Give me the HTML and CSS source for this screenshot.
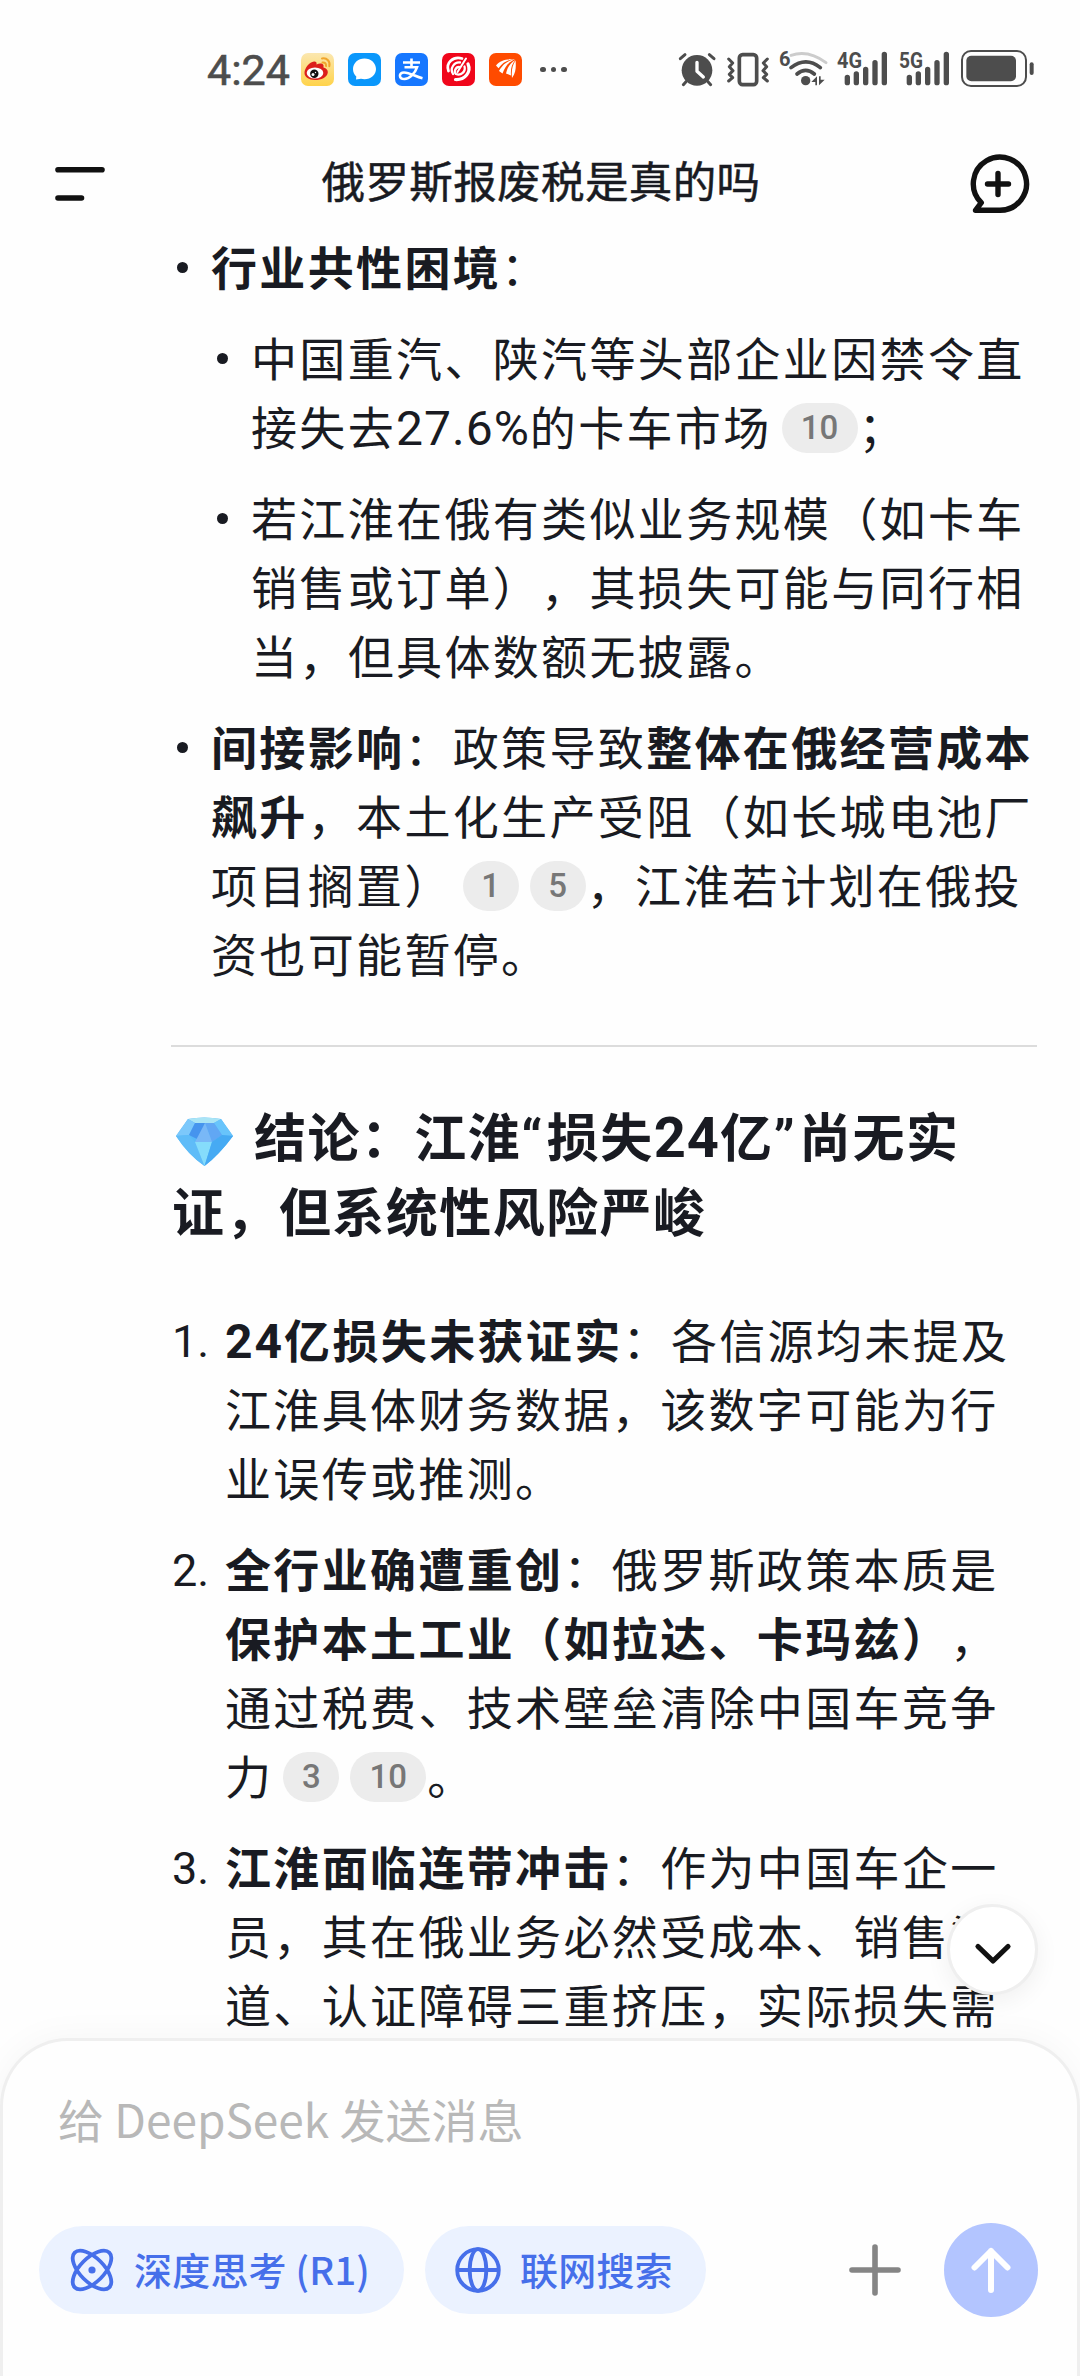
FILE: index.html
```html
<!DOCTYPE html>
<html lang="zh-CN">
<head>
<meta charset="utf-8">
<title>俄罗斯报废税是真的吗</title>
<link rel="stylesheet" href="styles.css">
</head>
<body>
<div class="screen">
  <div class="status">
    <span class="clock">4:24</span>
    <div class="apps">
      <svg class="app" viewBox="0 0 33 33"><defs><linearGradient id="wb" x1="0" y1="0" x2="0" y2="1"><stop offset="0" stop-color="#fbe7b0"/><stop offset="1" stop-color="#ffd34a"/></linearGradient></defs><rect width="33" height="33" rx="7" fill="url(#wb)"/><path d="M3.5 20c0-5 5-11 9.500-11.500 2-.2 3 1 2.500 3 2.500-1.200 6.500-1.500 7 .8.2 1-.2 1.700 0 2.200 3 .7 4.500 2.700 4.300 5C26.300 24.500 20 27 14 27S3.500 24 3.500 20z" fill="#dc1f1c"/><ellipse cx="14" cy="20" rx="8.300" ry="5.600" fill="#fff"/><circle cx="13.300" cy="20.700" r="4.200" fill="#111"/><circle cx="12" cy="21.500" r="1.500" fill="#fff"/><circle cx="14.500" cy="19.500" r=".7" fill="#fff"/><path d="M21 5.500c5-1 8.500 3 7.300 7.700M21.500 9.500c2.500-.3 3.800 1.200 3.500 3.500" fill="none" stroke="#f0a52c" stroke-width="2" stroke-linecap="round"/></svg>
      <svg class="app" viewBox="0 0 33 33"><rect width="33" height="33" rx="7" fill="#0a97fb"/><path d="M16.500 5.500c6.500 0 11.500 4.700 11.500 10.500s-5 10.300-11.500 10.300c-1.200 0-2.500-.2-3.500-.5L8 26.500l.3-3C6.300 21.700 5 19 5 16 5 10.200 10 5.500 16.500 5.500z" fill="#fff"/></svg>
      <svg class="app" viewBox="0 0 33 33"><rect width="33" height="33" rx="7" fill="#1677ff"/><path d="M8 9.500h17M16.500 5.500v8.500M9.500 14.300h12.500c-2 6-7.500 11.700-12.500 11.700-6 0-6-6.500-.5-6.500 6 0 11 4 18.500 5.800" fill="none" stroke="#fff" stroke-width="2.600"/></svg>
      <svg class="app" viewBox="0 0 33 33"><rect width="33" height="33" rx="7" fill="#f0061b"/><g fill="none" stroke="#fff" stroke-linecap="round"><path d="M20 5.500C11 3 3.500 10 6.500 18" stroke-width="2.800"/><path d="M18 9.500c-6-.5-10.500 6-7 11.500" stroke-width="2.300"/><path d="M26 11c3.500 8-3 16-12.500 15.500" stroke-width="3.200"/><path d="M22.500 13.500c1.500 5-3.500 9.500-8.500 7.500-2.500-2-.5-7 3-7" stroke-width="2.300"/><path d="M24 5.500 15.500 19" stroke-width="2"/></g></svg>
      <svg class="app" viewBox="0 0 33 33"><rect width="33" height="33" rx="7" fill="#ff4b00"/><path d="M7 12.500C11.500 7 17 6 26 6c-8 1-12 3-16.500 9.300zM10 18c4-7 8-10 16-11.700-6.500 3-9.800 6.700-12.500 14.200zM17 20.500c1.500-6 4-10.500 9.500-13.500-4 4.500-5 9-4.500 15.500zM23 25c-.8-7 .3-13 3.700-17.500 0 5 1 11-3.700 17.500z" fill="#fff"/></svg>
    </div>
    <span class="more"><i></i><i></i><i></i></span>
    <div class="signals">
      <svg width="36" height="35" viewBox="54 66 108 105"><circle cx="108" cy="121" r="46" fill="#4d4d4d"/><path d="M58 86 72 74M159 86 145 74M75 155l-8 9M141 155l8 9" stroke="#4d4d4d" stroke-width="9" stroke-linecap="round"/><path d="M108 97v27l19 17" fill="none" stroke="#fff" stroke-width="10" stroke-linecap="round" stroke-linejoin="round"/></svg>
      <svg class="vibrate" width="42" height="35" viewBox="198 66 126 105"><rect x="235" y="74" width="52" height="90" rx="10" fill="none" stroke="#4d4d4d" stroke-width="11"/><path d="m203 87 12 12-10 11 11 12-11 11 10 10-12 10M319 87l-12 12 10 11-11 12 11 11-10 10 12 10" fill="none" stroke="#4d4d4d" stroke-width="9" stroke-linecap="round" stroke-linejoin="round"/></svg>
      <svg class="wifi" width="47" height="38" viewBox="356 57 141 114"><path d="M389 76q52-18 105 22" fill="none" stroke="#ccc" stroke-width="9" stroke-linecap="round"/><path d="M389 113q45-35 88 0M407 132q26-22 52 0" fill="none" stroke="#4d4d4d" stroke-width="11" stroke-linecap="round"/><circle cx="433" cy="152" r="14" fill="#4d4d4d"/><path d="m450 156 17-17v27h-5v-10zM490 149l-17 17v-27h5v10z" fill="#4d4d4d"/><text x="353" y="108" class="gen">6</text></svg>
      <svg class="net" width="50" height="37" viewBox="528 60 150 111"><path d="M559 142v16M586 132v26M614 118v40M642 98v60M670 73v85" stroke="#4d4d4d" stroke-width="16" stroke-linecap="round"/><text x="528" y="114" class="gen" textLength="75" lengthAdjust="spacingAndGlyphs">4G</text></svg>
      <svg class="net" width="50" height="37" viewBox="528 60 150 111"><path d="M559 142v16M586 132v26M614 118v40M642 98v60M670 73v85" stroke="#4d4d4d" stroke-width="16" stroke-linecap="round"/><text x="528" y="114" class="gen" textLength="72" lengthAdjust="spacingAndGlyphs">5G</text></svg>
      <svg class="battery" width="73" height="37" viewBox="900 60 219 111"><rect x="903" y="63" width="192" height="105" rx="27" fill="none" stroke="#4d4d4d" stroke-width="6"/><rect x="916" y="77" width="149" height="77" rx="15" fill="#4d4d4d"/><path d="M1112 103v26" stroke="#4d4d4d" stroke-width="12" stroke-linecap="round"/></svg>
    </div>
  </div>

  <header class="topbar">
    <svg class="menu" width="50" height="36" viewBox="0 0 50 36"><path d="M3 3.800h44M3 32h23.500" stroke="#111" stroke-width="5.600" stroke-linecap="round"/></svg>
    <h1>俄罗斯报废税是真的吗</h1>
    <svg class="newchat" width="60" height="60" viewBox="0 0 60 60"><path d="M13.300 48.700A26.600 26.600 0 1 1 32 56.300H7.500zM30 19.500v21M19.500 30h21" fill="none" stroke="#111" stroke-width="5.400" stroke-linecap="round" stroke-linejoin="round"/></svg>
  </header>

  <main class="answer">
    <ul class="bullets">
      <li><strong>行业共性困境</strong>：
        <ul class="bullets nested">
          <li>中国重汽、陕汽等头部企业因禁令直<br>接失去<span class="num">27.6%</span>的卡车市场<span class="cite wide">10</span>；</li>
          <li>若江淮在俄有类似业务规模（如卡车<br>销售或订单），其损失可能与同行相<br>当，但具体数额无披露。</li>
        </ul>
      </li>
      <li><strong>间接影响</strong>：政策导致<strong>整体在俄经营成本<br>飙升</strong>，本土化生产受阻（如长城电池厂<br>项目搁置）<span class="cite">1</span><span class="cite">5</span>，江淮若计划在俄投<br>资也可能暂停。</li>
    </ul>
    <hr>
    <h2><svg class="gem" width="59" height="49" viewBox="0 0 59 49"><path d="M13 2Q29 -1 46 2L58 19Q44 38 29.500 49 14 38 1 19z" fill="#58b9f8"/><path d="M13 2Q29-1 46 2L39 6H20z" fill="#a9e4f5"/><path d="M13 2l7 4-6 12L1 19z" fill="#7cc8fb"/><path d="M46 2l-7 4 8 12 11 1z" fill="#68c4fb"/><path d="M20 6h10l-4 18-12-6z" fill="#4694ee"/><path d="M30 6h9l8 12-10 7z" fill="#61a7f4"/><path d="M30 6l7 19H20z" fill="#79b8f7"/><path d="M1 19l13-1 6 7 9.500 24Q13 38 1 19z" fill="#5fbcf8"/><path d="M20 25h17l-7.500 24z" fill="#85dcfb"/><path d="M37 25l10-7 11 1Q44 38 29.500 49z" fill="#46aaf3"/></svg>结论：江淮<span class="quote">“</span>损失<span class="num">24</span>亿<span class="quote">”</span>尚无实<br>证，但系统性风险严峻</h2>
    <ol class="points">
      <li><span class="idx">1.</span><p><strong><span class="num">24</span>亿损失未获证实</strong>：各信源均未提及<br>江淮具体财务数据，该数字可能为行<br>业误传或推测。</p></li>
      <li><span class="idx">2.</span><p><strong>全行业确遭重创</strong>：俄罗斯政策本质是<br><strong>保护本土工业（如拉达、卡玛兹）</strong>，<br>通过税费、技术壁垒清除中国车竞争<br>力<span class="cite">3</span><span class="cite wide">10</span>。</p></li>
      <li><span class="idx">3.</span><p><strong>江淮面临连带冲击</strong>：作为中国车企一<br>员，其在俄业务必然受成本、销售渠<br>道、认证障碍三重挤压，实际损失需</p></li>
    </ol>
    <button class="to-bottom"><svg width="36" height="22" viewBox="0 0 36 22"><path d="M3 3.500 18 18 33 3.500" fill="none" stroke="#111" stroke-width="5.200" stroke-linecap="round" stroke-linejoin="round"/></svg></button>
  </main>

  <footer class="composer">
    <div class="placeholder">给 DeepSeek 发送消息</div>
    <div class="tools">
      <button class="pill think"><svg width="46" height="46" viewBox="-23 -23 46 46"><g fill="none" stroke="#466fea" stroke-width="3.800"><ellipse rx="24.500" ry="12" transform="rotate(45)"/><ellipse rx="24.500" ry="12" transform="rotate(-45)"/></g><circle r="3.600" fill="#466fea"/></svg><span>深度思考 (R1)</span></button>
      <button class="pill web"><svg width="46" height="46" viewBox="-23 -23 46 46"><g fill="none" stroke="#466fea" stroke-width="3.800"><circle r="20.800"/><ellipse rx="8.300" ry="20.800"/><path d="M-21 0h42"/></g></svg><span>联网搜索</span></button>
      <svg class="plus" width="52" height="52" viewBox="0 0 52 52"><path d="M26 3v46M3 26h46" stroke="#858585" stroke-width="5.600" stroke-linecap="round"/></svg>
      <button class="send"><svg width="44" height="48" viewBox="0 0 44 48"><path d="M22 44V5M5.500 21.500 22 5l16.500 16.500" fill="none" stroke="#fff" stroke-width="6" stroke-linecap="round" stroke-linejoin="round"/></svg></button>
    </div>
  </footer>
</div>
</body>
</html>
```
FILE: styles.css
```css
* { box-sizing: border-box; margin: 0; padding: 0; }
body {
  background: #fefefe;
  color: #191b22;
  font-family: "Noto Sans CJK SC", sans-serif;
  text-spacing-trim: space-all;
}
svg { display: block; flex: none; overflow: visible; }
button { border: 0; font: inherit; }
ul, ol { list-style: none; }
.screen {
  width: 1080px;
  height: 2376px;
  display: flex;
  flex-direction: column;
  overflow: hidden;
}

/* status bar */
.status {
  height: 139px;
  padding: 0 46px 0 207px;
  display: flex;
  align-items: center;
}
.clock {
  width: 94px;
  font: 43px/50px Roboto, sans-serif;
  color: #4d4d4d;
  -webkit-text-stroke: .6px #4d4d4d;
}
.apps { display: flex; gap: 14px; }
.app { width: 33px; height: 33px; }
.more { display: flex; gap: 5px; margin-left: 18px; }
.more i { width: 5.500px; height: 5.500px; border-radius: 50%; background: #4d4d4d; }
.signals { margin: 0 0 4px auto; display: flex; align-items: flex-end; }
.vibrate { margin-left: 12px; }
.wifi { margin-left: 11px; }
.net { margin-left: 10px; }
.net + .net { margin-left: 12px; }
.battery { margin-left: 12px; }
.gen { font: bold 66px "Roboto", sans-serif; fill: #4d4d4d; }
.wifi .gen { font-size: 60px; }

/* title bar */
.topbar {
  height: 92px;
  padding: 0 52px 0 55px;
  display: flex;
  align-items: center;
  justify-content: space-between;
}
.menu { margin-bottom: 3px; }
.newchat { margin-bottom: 2px; }
.topbar h1 {
  font-size: 43.500px;
  font-weight: 400;
  -webkit-text-stroke: .5px #191b22;
  line-height: 60px;
  letter-spacing: .4px;
  margin: 0 0 11px 9px;
}

/* answer text */
.answer {
  position: relative;
  height: 1807px;
  padding: 0 42px 0 171px;
  font-size: 46px;
  line-height: 69px;
  letter-spacing: 2.350px;
  white-space: nowrap;
}
strong, h2 { font-weight: 700; }
.bullets { display: flex; flex-direction: column; gap: 22px; }
.bullets > li { padding-left: 40px; position: relative; }
.bullets > li::before {
  content: "";
  position: absolute;
  left: 6px;
  top: 31px;
  width: 11px;
  height: 11px;
  border-radius: 50%;
  background: #191b22;
}
.nested { margin-top: 22px; }
.num {
  font-family: Roboto, sans-serif;
  font-size: 48px;
  line-height: 1;
  letter-spacing: 1px;
}
strong .num { letter-spacing: 2px; }
.cite {
  display: inline-block;
  vertical-align: top;
  width: 56px;
  height: 50px;
  margin: 12px 1px 7px 10px;
  border-radius: 25px;
  background: #ececec;
  color: #777;
  font: 500 33px/50px Roboto, sans-serif;
  letter-spacing: 0;
  text-align: center;
}
.cite.wide { width: 76px; }
hr { height: 2px; border: 0; background: #dcdcdc; margin: 58px 1px 0 0; }
h2 {
  margin-top: 50px;
  padding-left: 1px;
  font-size: 52px;
  line-height: 75px;
  letter-spacing: 1.450px;
}
h2 .num { font-size: 56px; letter-spacing: 1px; }
h2 .quote { font-family: Roboto, sans-serif; line-height: 1; letter-spacing: 4.500px; }
.gem { display: inline-block; vertical-align: top; margin: 20px 20px 0 3px; }
.points { margin-top: 57px; display: flex; flex-direction: column; gap: 22px; }
.points li { display: flex; }
.idx {
  width: 54px;
  padding: 3px 0 0 1px;
  font-family: Roboto, sans-serif;
  font-size: 45px;
  letter-spacing: 0;
}
.to-bottom {
  position: absolute;
  left: 947px;
  top: 1673px;
  width: 91px;
  height: 91px;
  border-radius: 50%;
  border: 3px solid #efefef;
  background: #fff;
  box-shadow: 0 6px 24px rgba(0, 0, 0, .06);
  display: flex;
  align-items: center;
  justify-content: center;
  padding-top: 9px;
}

/* message composer */
.composer {
  position: relative;
  height: 338px;
  flex: none;
  padding: 44px 39px 0 36px;
  background: #fefefe;
  border: 3px solid #efefef;
  border-bottom: 0;
  border-radius: 68px 68px 0 0;
  box-shadow: 0 0 36px rgba(0, 0, 0, .04);
}
.placeholder {
  padding-left: 19px;
  font-size: 46px;
  line-height: 66px;
  color: #b8b8b8;
}
.tools { margin-top: 72px; height: 94px; display: flex; align-items: center; }
.pill {
  height: 88px;
  border-radius: 44px;
  background: #ebf2ff;
  color: #466fea;
  font-size: 38px;
  font-weight: 500;
  letter-spacing: .2px;
  white-space: nowrap;
  display: flex;
  align-items: center;
  gap: 19px;
  padding-left: 30px;
}
.pill span { margin-top: -4px; }
.think { width: 365px; }
.web { width: 281px; margin-left: 21px; }
.plus { margin-left: auto; }
.send {
  width: 94px;
  height: 94px;
  margin-left: 43px;
  border-radius: 50%;
  background: #b3c5ff;
  display: flex;
  align-items: center;
  justify-content: center;
}
```
